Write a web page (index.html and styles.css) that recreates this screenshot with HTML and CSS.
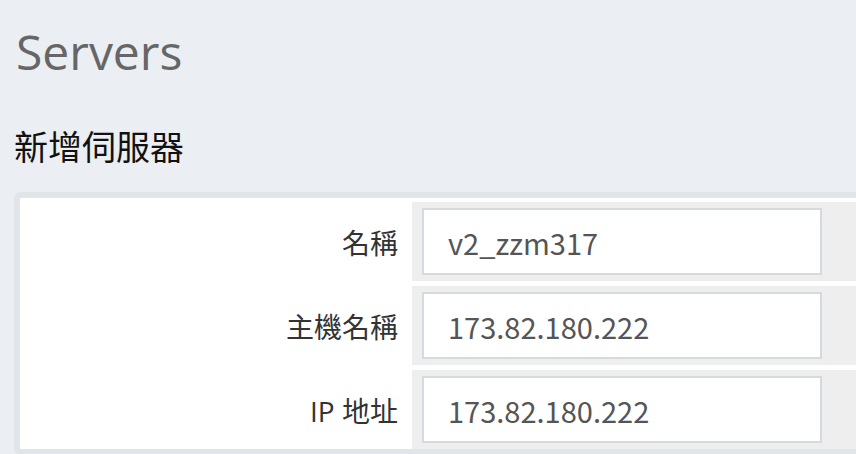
FILE: index.html
```html
<!DOCTYPE html>
<html lang="zh-Hant">
<head>
<meta charset="utf-8">
<link rel="stylesheet" href="styles.css">
</head>
<body>
<div class="page">
  <h1 class="title">Servers</h1>
  <h2 class="subtitle">新增伺服器</h2>
  <form class="card">
    <div class="row">
      <label class="label">名稱</label>
      <div class="field"><input class="input" type="text" value="v2_zzm317"></div>
    </div>
    <div class="row">
      <label class="label">主機名稱</label>
      <div class="field"><input class="input" type="text" value="173.82.180.222"></div>
    </div>
    <div class="row">
      <label class="label">IP 地址</label>
      <div class="field"><input class="input" type="text" value="173.82.180.222"></div>
    </div>
  </form>
</div>
</body>
</html>
```

FILE: styles.css
```css
html, body {
  margin: 0;
  padding: 0;
  background: #ebeef2;
  overflow: hidden;
}
.page {
  padding: 0 0 0 14px;
  width: 960px;
}
.title {
  margin: 24px 0 0 0;
  padding-left: 2px;
  font-family: "Open Sans", sans-serif;
  font-weight: 400;
  font-size: 48px;
  line-height: 56px;
  color: #666666;
}
.subtitle {
  margin: 46px 0 0 0;
  font-family: "Noto Sans CJK TC", sans-serif;
  font-weight: 400;
  font-size: 34px;
  line-height: 40px;
  color: #111111;
}
.card {
  margin: 26px 0 0 0;
  border: 6px solid #e1e5e9;
  border-radius: 7px;
  background: #ffffff;
  padding: 4px 0 0 0;
  display: flex;
  flex-direction: column;
  gap: 5px;
}
.row {
  display: grid;
  grid-template-columns: 392px 1fr;
  align-items: stretch;
}
.label {
  display: flex;
  align-items: center;
  justify-content: flex-end;
  padding-right: 14px;
  font-family: "Open Sans", "Noto Sans CJK TC", sans-serif;
  font-size: 28px;
  color: #333333;
}
.field {
  background: #eeeeee;
  padding: 6px 10px;
}
.input {
  box-sizing: border-box;
  display: block;
  width: 400px;
  height: 67px;
  margin: 0;
  border: 2px solid #d5d9e2;
  background: #ffffff;
  padding: 0 0 0 24px;
  font-family: "Noto Sans CJK TC", sans-serif;
  font-size: 29px;
  color: #555555;
  outline: none;
}
```
